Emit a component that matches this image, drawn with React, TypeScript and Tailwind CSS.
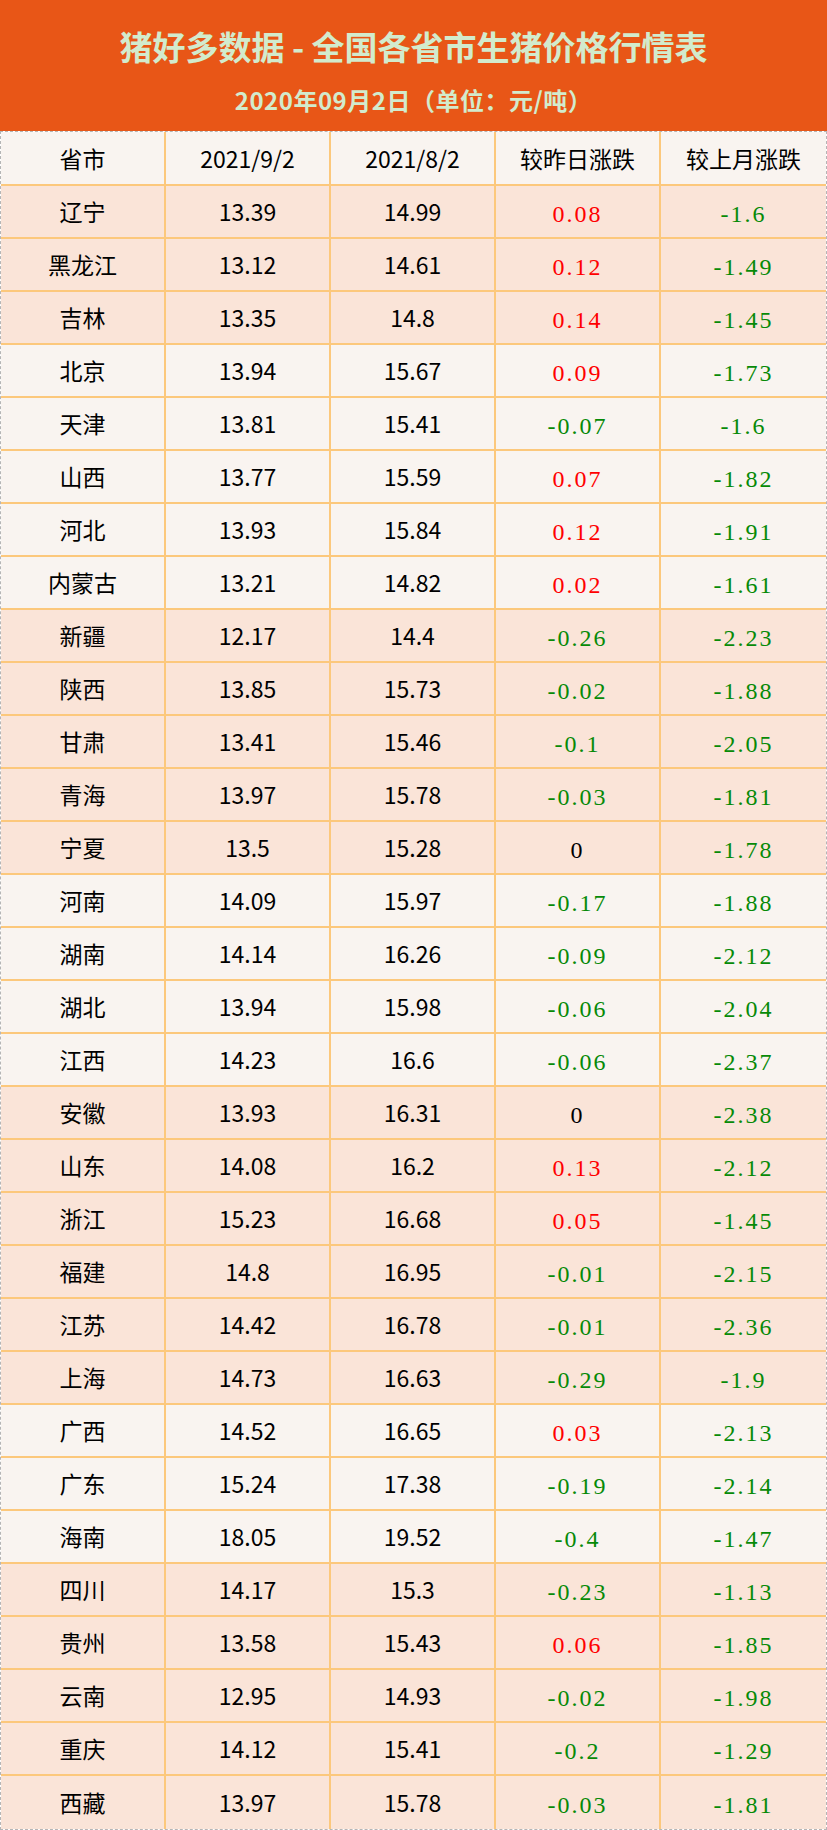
import React from 'react'

type Row = [string, string, string, string, string, boolean]

// [province, 9/2, 8/2, day change, month change, peach bg]
const rows: Row[] = [
  ['辽宁', '13.39', '14.99', '0.08', '-1.6', true],
  ['黑龙江', '13.12', '14.61', '0.12', '-1.49', true],
  ['吉林', '13.35', '14.8', '0.14', '-1.45', true],
  ['北京', '13.94', '15.67', '0.09', '-1.73', false],
  ['天津', '13.81', '15.41', '-0.07', '-1.6', false],
  ['山西', '13.77', '15.59', '0.07', '-1.82', false],
  ['河北', '13.93', '15.84', '0.12', '-1.91', false],
  ['内蒙古', '13.21', '14.82', '0.02', '-1.61', false],
  ['新疆', '12.17', '14.4', '-0.26', '-2.23', true],
  ['陕西', '13.85', '15.73', '-0.02', '-1.88', true],
  ['甘肃', '13.41', '15.46', '-0.1', '-2.05', true],
  ['青海', '13.97', '15.78', '-0.03', '-1.81', true],
  ['宁夏', '13.5', '15.28', '0', '-1.78', true],
  ['河南', '14.09', '15.97', '-0.17', '-1.88', false],
  ['湖南', '14.14', '16.26', '-0.09', '-2.12', false],
  ['湖北', '13.94', '15.98', '-0.06', '-2.04', false],
  ['江西', '14.23', '16.6', '-0.06', '-2.37', false],
  ['安徽', '13.93', '16.31', '0', '-2.38', true],
  ['山东', '14.08', '16.2', '0.13', '-2.12', true],
  ['浙江', '15.23', '16.68', '0.05', '-1.45', true],
  ['福建', '14.8', '16.95', '-0.01', '-2.15', true],
  ['江苏', '14.42', '16.78', '-0.01', '-2.36', true],
  ['上海', '14.73', '16.63', '-0.29', '-1.9', true],
  ['广西', '14.52', '16.65', '0.03', '-2.13', false],
  ['广东', '15.24', '17.38', '-0.19', '-2.14', false],
  ['海南', '18.05', '19.52', '-0.4', '-1.47', false],
  ['四川', '14.17', '15.3', '-0.23', '-1.13', true],
  ['贵州', '13.58', '15.43', '0.06', '-1.85', true],
  ['云南', '12.95', '14.93', '-0.02', '-1.98', true],
  ['重庆', '14.12', '15.41', '-0.2', '-1.29', true],
  ['西藏', '13.97', '15.78', '-0.03', '-1.81', true],
]

const sans = "font-['Noto_Sans_CJK_SC',sans-serif]"

const changeColor = (v: string) =>
  v === '0' ? 'text-black' : v.startsWith('-') ? 'text-[#078a07]' : 'text-[#ff0000]'

const Cell = ({ children, last, bottom, serif, color }: { children: React.ReactNode; last?: boolean; bottom?: boolean; serif?: boolean; color?: string }) => (
  <div
    className={`flex items-center justify-center border-[#fcc87c] ${last ? '' : 'border-r-2'} ${bottom ? '' : 'border-b-2'} ${
      serif ? "font-['Liberation_Serif',serif] text-[24px] tracking-[2px] pt-[4px]" : `${sans} text-[23px] text-black`
    } ${color ?? ''}`}
  >
    {children}
  </div>
)

export default function App() {
  return (
    <div className="w-[827px] bg-white">
      <div className={`flex h-[131px] flex-col items-center bg-[#e85617] text-[#d2ebcd] font-bold ${sans}`}>
        <h1 className="mt-[22px] text-[33px] leading-[48px]">猪好多数据 - 全国各省市生猪价格行情表</h1>
        <h2 className="mt-[14px] text-[24px] leading-[32px] tracking-[0.5px]">2020年09月2日（单位：元/吨）</h2>
      </div>

      <div className="border border-dashed border-[#b5b5b5]">
        <div className="grid grid-cols-5 h-[54px] bg-[#f9f4f0]">
          <Cell>省市</Cell>
          <Cell>2021/9/2</Cell>
          <Cell>2021/8/2</Cell>
          <Cell>较昨日涨跌</Cell>
          <Cell last>较上月涨跌</Cell>
        </div>
        {rows.map(([name, a, b, d, m, peach], i) => {
          const bottom = i === rows.length - 1
          return (
            <div key={name} className={`grid grid-cols-5 h-[53px] ${peach ? 'bg-[#fae4d8]' : 'bg-[#f9f4f0]'}`}>
              <Cell bottom={bottom}>{name}</Cell>
              <Cell bottom={bottom}>{a}</Cell>
              <Cell bottom={bottom}>{b}</Cell>
              <Cell bottom={bottom} serif color={changeColor(d)}>{d}</Cell>
              <Cell bottom={bottom} serif last color={changeColor(m)}>{m}</Cell>
            </div>
          )
        })}
      </div>
    </div>
  )
}
